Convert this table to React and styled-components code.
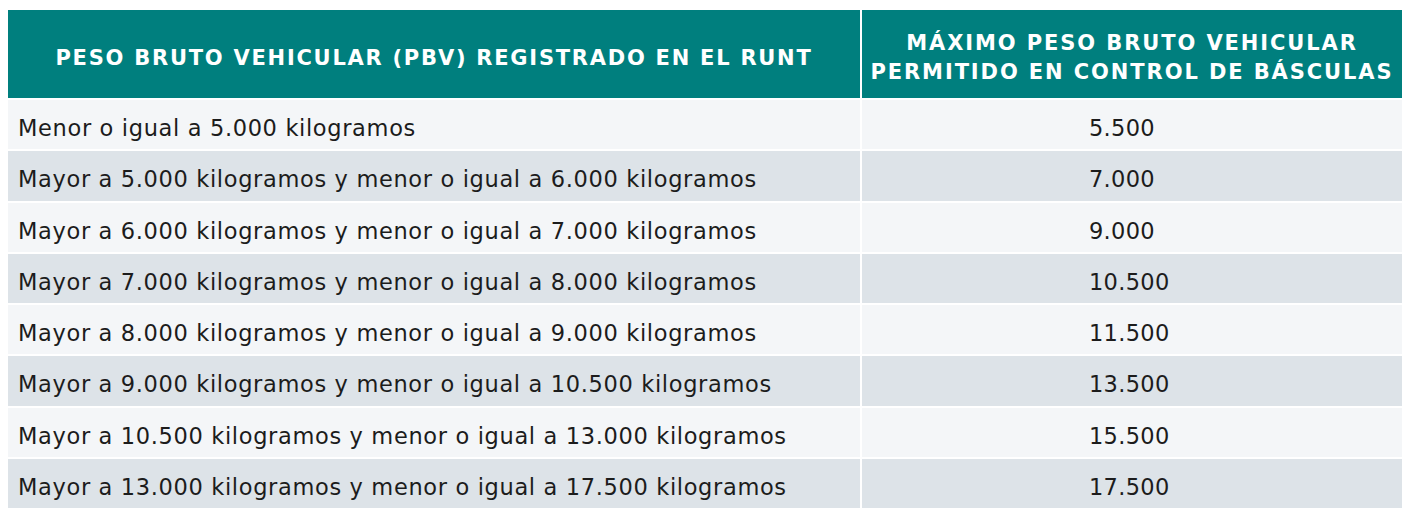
import React from "react";
import styled, { createGlobalStyle } from "styled-components";

const Global = createGlobalStyle`
  html, body { margin: 0; padding: 0; background: #ffffff; }
  body { font-family: "DejaVu Sans", "Open Sans", sans-serif; }
`;

const Page = styled.div`
  padding: 8px 8px 0 6px;
`;

const Table = styled.table`
  border-collapse: separate;
  border-spacing: 2px;
  width: 1398px;
  table-layout: fixed;
`;

const HeadCell = styled.th`
  background: #007f7e;
  color: #ffffff;
  font-weight: 700;
  font-size: 21px;
  line-height: 29px;
  letter-spacing: ${(p) => (p.$wide ? "1.9px" : "1.75px")};
  text-align: center;
  vertical-align: middle;
  height: 88px;
  padding: 8px 0 0 0;
  box-sizing: border-box;
  text-transform: uppercase;
  white-space: nowrap;
`;

const Cell = styled.td`
  background: ${(p) => (p.$alt ? "#dde3e8" : "#f4f6f8")};
  color: #1c1c1c;
  font-size: 22.5px;
  letter-spacing: ${(p) => (p.$num ? "0.3px" : "0.65px")};
  height: 49.25px;
  box-sizing: border-box;
  padding: 7px 0 0 ${(p) => (p.$num ? "227px" : "10px")};
  vertical-align: middle;
  white-space: nowrap;
`;

const rows = [
  ["Menor o igual a 5.000 kilogramos", "5.500"],
  ["Mayor a 5.000 kilogramos y menor o igual a 6.000 kilogramos", "7.000"],
  ["Mayor a 6.000 kilogramos y menor o igual a 7.000 kilogramos", "9.000"],
  ["Mayor a 7.000 kilogramos y menor o igual a 8.000 kilogramos", "10.500"],
  ["Mayor a 8.000 kilogramos y menor o igual a 9.000 kilogramos", "11.500"],
  ["Mayor a 9.000 kilogramos y menor o igual a 10.500 kilogramos", "13.500"],
  ["Mayor a 10.500 kilogramos y menor o igual a 13.000 kilogramos", "15.500"],
  ["Mayor a 13.000 kilogramos y menor o igual a 17.500 kilogramos", "17.500"],
];

export default function App() {
  return (
    <>
      <Global />
      <Page>
        <Table>
          <colgroup>
            <col style={{ width: "852px" }} />
            <col style={{ width: "540px" }} />
          </colgroup>
          <thead>
            <tr>
              <HeadCell>PESO BRUTO VEHICULAR (PBV) REGISTRADO EN EL RUNT</HeadCell>
              <HeadCell $wide>
                MÁXIMO PESO BRUTO VEHICULAR
                <br />
                PERMITIDO EN CONTROL DE BÁSCULAS
              </HeadCell>
            </tr>
          </thead>
          <tbody>
            {rows.map(([a, b], i) => (
              <tr key={i}>
                <Cell $alt={i % 2 === 1}>{a}</Cell>
                <Cell $alt={i % 2 === 1} $num>
                  {b}
                </Cell>
              </tr>
            ))}
          </tbody>
        </Table>
      </Page>
    </>
  );
}
